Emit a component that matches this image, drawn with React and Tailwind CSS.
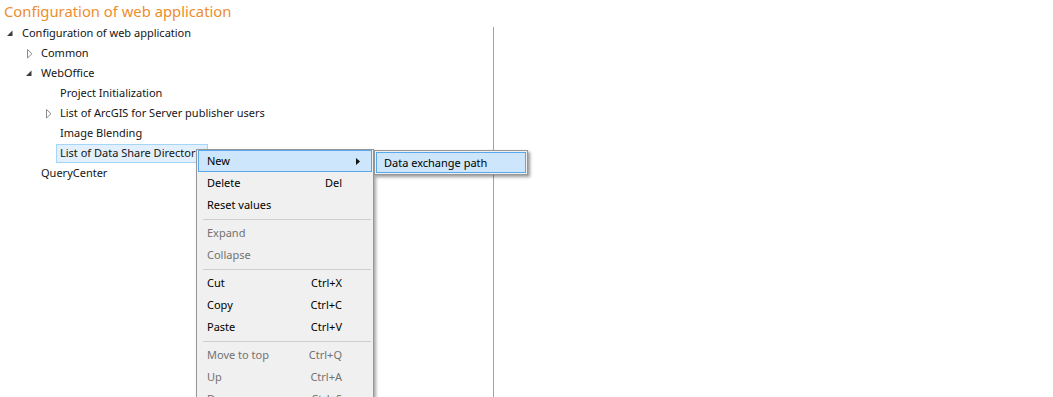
import React from "react";

const TREE = [
  { label: "Configuration of web application", level: 0, expander: "open" },
  { label: "Common", level: 1, expander: "closed" },
  { label: "WebOffice", level: 1, expander: "open" },
  { label: "Project Initialization", level: 2 },
  { label: "List of ArcGIS for Server publisher users", level: 2, expander: "closed" },
  { label: "Image Blending", level: 2 },
  { label: "List of Data Share Directories", level: 2, selected: true },
  { label: "QueryCenter", level: 1 },
];

const MENU = [
  { label: "New", submenu: true, active: true },
  { label: "Delete", shortcut: "Del" },
  { label: "Reset values" },
  { sep: true },
  { label: "Expand", disabled: true },
  { label: "Collapse", disabled: true },
  { sep: true },
  { label: "Cut", shortcut: "Ctrl+X" },
  { label: "Copy", shortcut: "Ctrl+C" },
  { label: "Paste", shortcut: "Ctrl+V" },
  { sep: true },
  { label: "Move to top", shortcut: "Ctrl+Q", disabled: true },
  { label: "Up", shortcut: "Ctrl+A", disabled: true },
  { label: "Down", shortcut: "Ctrl+S", disabled: true },
  { label: "Move to bottom", shortcut: "Ctrl+W", disabled: true },
];

const Expander = ({ type }) => {
  if (!type) return <span className="w-[18px] shrink-0" />;
  return (
    <span className="flex w-[18px] shrink-0 items-center">
      {type === "open" ? (
        <svg width="7" height="10" viewBox="0 0 7 10" className="ml-[6px]">
          <polygon points="6.5,2.5 6.5,8 1,8" fill="#3c3c3c" />
        </svg>
      ) : (
        <svg width="7" height="10" viewBox="0 0 7 10" className="ml-[8px] mt-[1px]">
          <polygon points="0.5,0.5 0.5,9 5,4.75" fill="none" stroke="#8c8c8c" strokeWidth="1" />
        </svg>
      )}
    </span>
  );
};

const TreeRow = ({ item }) => (
  <div className="flex h-[20px] items-center" style={{ paddingLeft: item.level * 19 }}>
    <Expander type={item.expander} />
    <span
      className={`flex h-[19px] items-center overflow-hidden whitespace-nowrap border px-[3px] pt-px ${
        item.selected ? "w-[152px] border-[#a6d6f7] bg-[#e1f0fc]" : "border-transparent"
      }`}
    >
      {item.label}
    </span>
  </div>
);

const MenuItem = ({ item }) => {
  if (item.sep) {
    return (
      <div className="flex h-[6px] items-center pl-[5px] pr-[1px]">
        <div className="h-px w-full bg-[#cfcfcf]" />
      </div>
    );
  }
  return (
    <div
      className={`flex h-[22px] items-center justify-between border pl-[8px] pr-[29px] pt-px ${
        item.active ? "border-[#5aa8ec] bg-[#cde6fb]" : "border-transparent"
      } ${item.disabled ? "text-[#727272]" : "text-black"}`}
    >
      <span>{item.label}</span>
      {item.shortcut && <span>{item.shortcut}</span>}
      {item.submenu && (
        <svg width="4" height="7" viewBox="0 0 4 7" className="-mr-[18px]">
          <polygon points="0,0 4,3.5 0,7" fill="#111" />
        </svg>
      )}
    </div>
  );
};

export default function App() {
  return (
    <div
      className="relative h-[397px] w-full overflow-hidden bg-white text-[11px] text-[#151515]"
      style={{ fontFamily: '"Noto Sans", "Open Sans", sans-serif' }}
    >
      <div className="flex h-[23px] items-center pl-[4px] text-[14.8px] leading-none text-[#ee8d2f]">
        Configuration of web application
      </div>

      <div className="flex h-[374px]">
        <div className="w-[493px] shrink-0">
          {TREE.map((item) => (
            <TreeRow key={item.label} item={item} />
          ))}
        </div>
        <div className="mt-[4px] w-px bg-[#a3a3a3]" />
      </div>

      <div className="absolute left-[196px] top-[149px] w-[178px] border border-[#979797] bg-[#f0f0f0] px-px pb-[2px] shadow-[2px_2px_3px_rgba(0,0,0,0.35)]">
        {MENU.map((item, idx) => (
          <MenuItem key={idx} item={item} />
        ))}
      </div>

      <div className="absolute left-[374px] top-[150px] w-[154px] border border-[#979797] bg-[#f0f0f0] p-px shadow-[2px_2px_3px_rgba(0,0,0,0.4)]">
        <div className="flex h-[21px] items-center border border-[#5aa8ec] bg-[#cde6fb] pl-[7px] pt-px text-black">
          Data exchange path
        </div>
      </div>
    </div>
  );
}
